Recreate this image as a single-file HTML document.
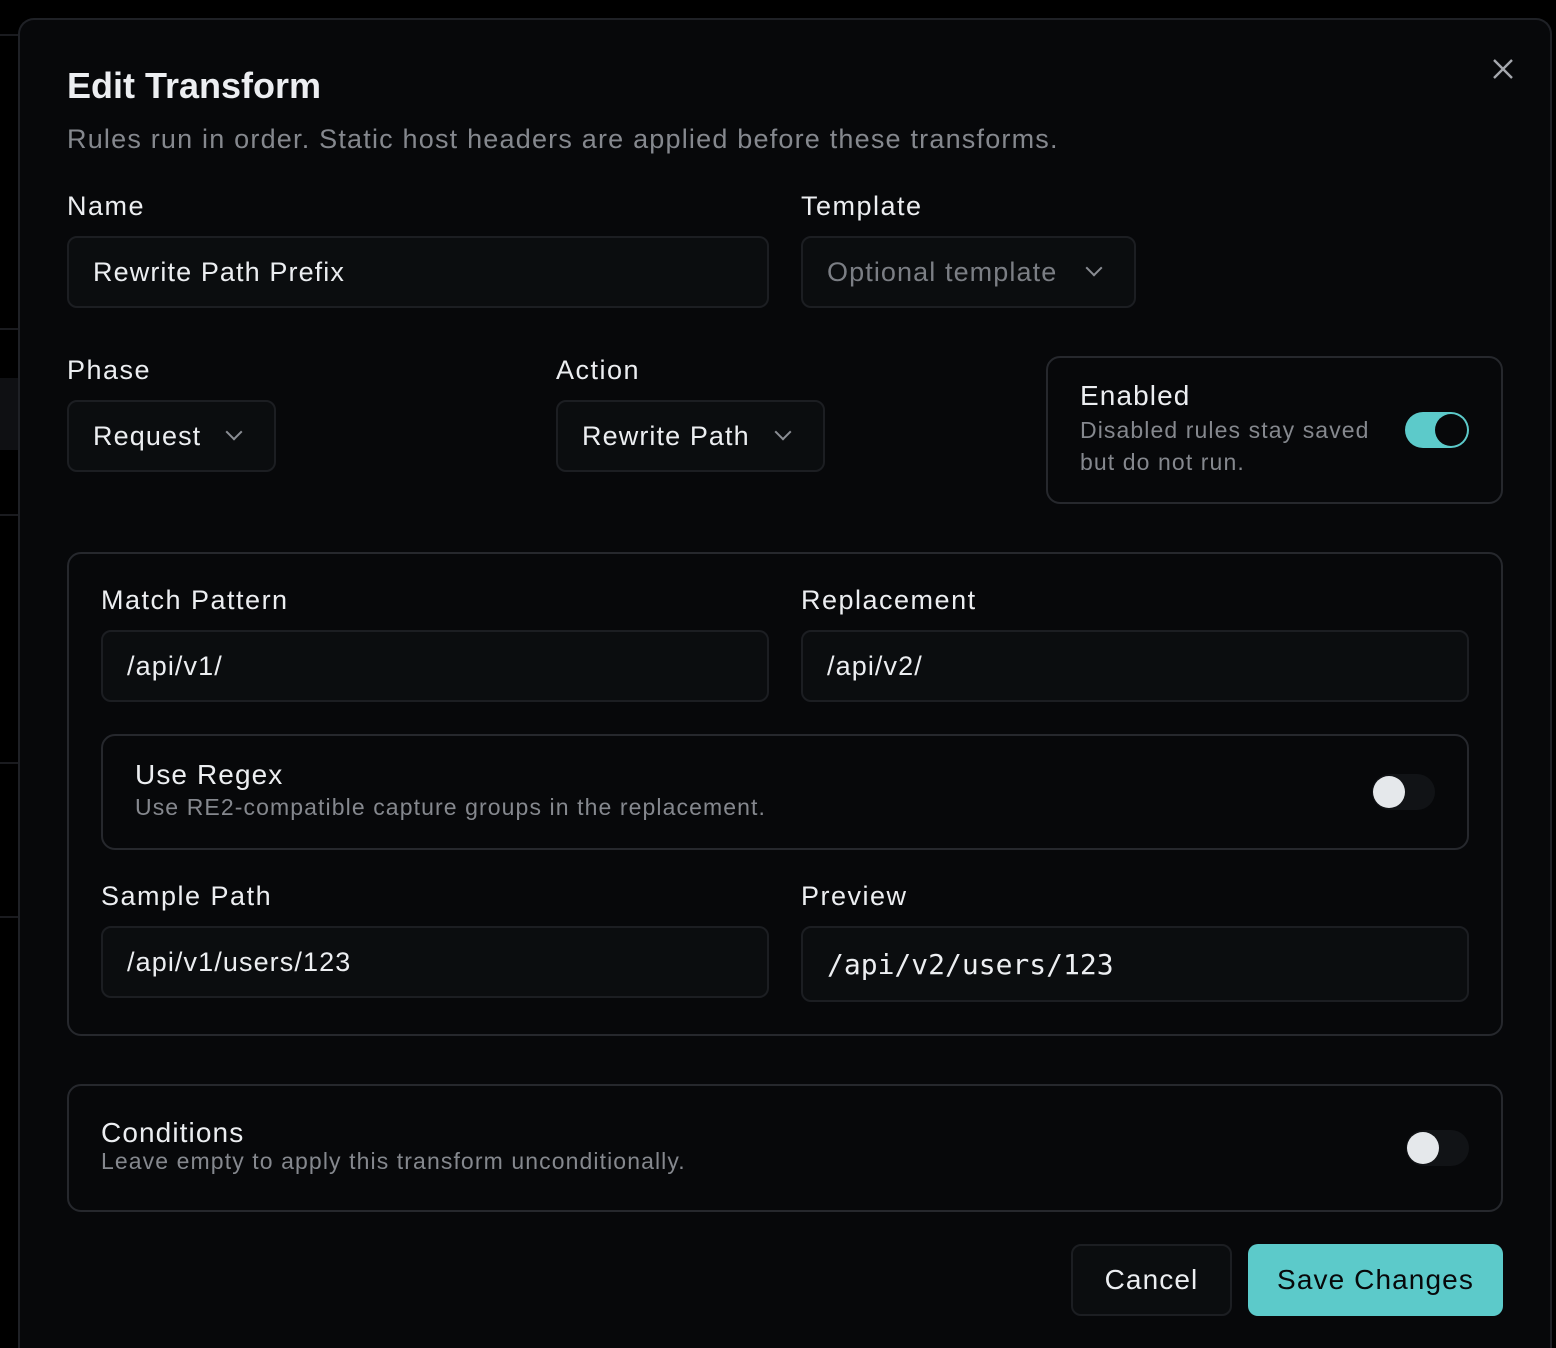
<!DOCTYPE html>
<html style="overflow:hidden;height:1348px"><head><meta charset="utf-8"><style>
*{box-sizing:border-box;margin:0;padding:0}
body{width:1556px;height:1348px;background:#000;overflow:hidden;position:relative;font-family:"Liberation Sans",sans-serif;color:#e8eaed;letter-spacing:1.1px}
.a{position:absolute}
.modal{left:18px;top:18px;width:1534px;height:1345px;background:#07080a;border:2px solid #1f2126;border-bottom:none;border-radius:16px 16px 0 0}
.t{position:absolute;white-space:nowrap}
.lbl{font-size:27px;color:#eceef1;letter-spacing:1.5px}
.inp{position:absolute;background:#0b0d0f;border:2px solid #1c1e22;border-radius:10px;font-size:27px;color:#eceef1;padding-left:24px;display:flex;align-items:center}
.box{position:absolute;border:2px solid #26282d;border-radius:14px}
.sub{font-size:23px;color:#85888e}
.chev{position:absolute;width:12px;height:12px;border-right:2px solid #8a8d93;border-bottom:2px solid #8a8d93;transform:rotate(45deg)}
</style></head><body>
<div class="a" style="left:0;top:34px;width:18px;height:2px;background:#1a1b1f"></div>
<div class="a" style="left:0;top:328px;width:18px;height:2px;background:#1a1b1f"></div>
<div class="a" style="left:0;top:378px;width:18px;height:72px;background:#0f1013"></div>
<div class="a" style="left:0;top:514px;width:18px;height:2px;background:#1a1b1f"></div>
<div class="a" style="left:0;top:762px;width:18px;height:2px;background:#1a1b1f"></div>
<div class="a" style="left:0;top:916px;width:18px;height:2px;background:#1a1b1f"></div>
<div class="a modal"></div>

<div class="t" style="left:67px;top:65px;font-size:36px;font-weight:bold;color:#eceef1;letter-spacing:0">Edit Transform</div>
<div class="t" style="left:67px;top:124px;font-size:27px;color:#85888e;letter-spacing:1.2px">Rules run in order. Static host headers are applied before these transforms.</div>
<svg class="a" style="left:1490px;top:56px" width="26" height="26" viewBox="0 0 26 26"><path d="M4 4L22 22M22 4L4 22" stroke="#a4a7ad" stroke-width="2.4" fill="none"/></svg>

<div class="t lbl" style="left:67px;top:191px">Name</div>
<div class="inp" style="left:67px;top:236px;width:702px;height:72px">Rewrite Path Prefix</div>
<div class="t lbl" style="left:801px;top:191px">Template</div>
<div class="inp" style="left:801px;top:236px;width:335px;height:72px;color:#7b7e84">Optional template</div>
<div class="chev" style="left:1088px;top:262px"></div>

<div class="t lbl" style="left:67px;top:355px">Phase</div>
<div class="inp" style="left:67px;top:400px;width:209px;height:72px">Request</div>
<div class="chev" style="left:228px;top:426px"></div>
<div class="t lbl" style="left:556px;top:355px">Action</div>
<div class="inp" style="left:556px;top:400px;width:269px;height:72px">Rewrite Path</div>
<div class="chev" style="left:777px;top:426px"></div>

<div class="box" style="left:1046px;top:356px;width:457px;height:148px"></div>
<div class="t" style="left:1080px;top:380px;font-size:28px;color:#eceef1">Enabled</div>
<div class="t sub" style="left:1080px;top:414px;line-height:32px">Disabled rules stay saved<br>but do not run.</div>
<div class="a" style="left:1405px;top:412px;width:64px;height:36px;border-radius:18px;background:#5ccaca"></div>
<div class="a" style="left:1435px;top:414px;width:32px;height:32px;border-radius:50%;background:#07080a"></div>

<div class="box" style="left:67px;top:552px;width:1436px;height:484px"></div>
<div class="t lbl" style="left:101px;top:585px">Match Pattern</div>
<div class="inp" style="left:101px;top:630px;width:668px;height:72px">/api/v1/</div>
<div class="t lbl" style="left:801px;top:585px">Replacement</div>
<div class="inp" style="left:801px;top:630px;width:668px;height:72px">/api/v2/</div>

<div class="box" style="left:101px;top:734px;width:1368px;height:116px"></div>
<div class="t" style="left:135px;top:759px;font-size:28px;color:#eceef1">Use Regex</div>
<div class="t sub" style="left:135px;top:794px">Use RE2-compatible capture groups in the replacement.</div>
<div class="a" style="left:1372px;top:774px;width:63px;height:36px;border-radius:18px;background:#111316"></div>
<div class="a" style="left:1373px;top:776px;width:32px;height:32px;border-radius:50%;background:#e5e8eb"></div>

<div class="t lbl" style="left:101px;top:881px">Sample Path</div>
<div class="inp" style="left:101px;top:926px;width:668px;height:72px">/api/v1/users/123</div>
<div class="t lbl" style="left:801px;top:881px">Preview</div>
<div class="inp" style="left:801px;top:926px;width:668px;height:76px;font-family:'DejaVu Sans Mono',monospace;font-size:28px;letter-spacing:0;padding-top:0">/api/v2/users/123</div>

<div class="box" style="left:67px;top:1084px;width:1436px;height:128px"></div>
<div class="t" style="left:101px;top:1117px;font-size:28px;color:#eceef1">Conditions</div>
<div class="t sub" style="left:101px;top:1148px">Leave empty to apply this transform unconditionally.</div>
<div class="a" style="left:1406px;top:1130px;width:63px;height:36px;border-radius:18px;background:#111316"></div>
<div class="a" style="left:1407px;top:1132px;width:32px;height:32px;border-radius:50%;background:#e5e8eb"></div>

<div class="a" style="left:1071px;top:1244px;width:161px;height:72px;border:2px solid #1c1e22;border-radius:10px;background:#0b0d0f;font-size:28px;color:#eceef1;display:flex;align-items:center;justify-content:center">Cancel</div>
<div class="a" style="left:1248px;top:1244px;width:255px;height:72px;border-radius:10px;background:#5ccaca;font-size:28px;color:#07080a;display:flex;align-items:center;justify-content:center">Save Changes</div>
</body></html>
